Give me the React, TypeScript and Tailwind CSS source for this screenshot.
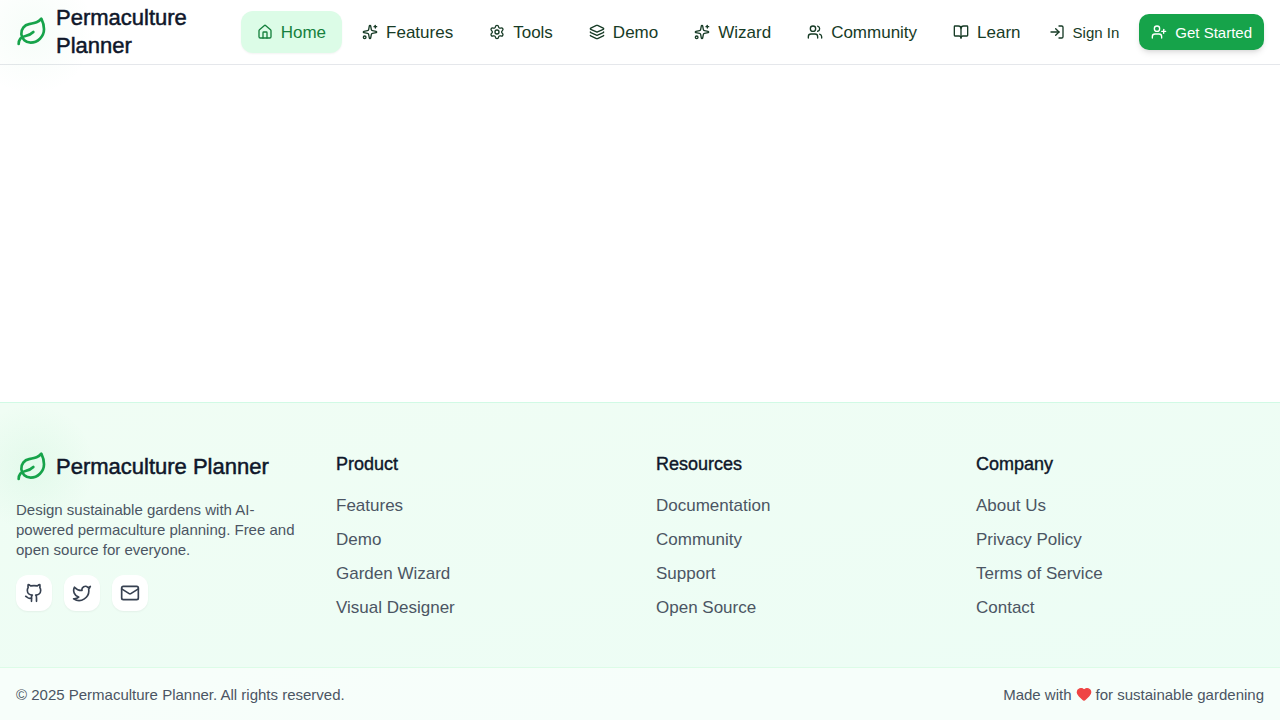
import {
  Leaf, House, Sparkles, Settings, Layers, Users, BookOpen, LogIn, UserPlus, Github, Twitter, Mail, Heart,
} from 'lucide-react';

const navItems = [
  { label: 'Home', icon: House, active: true },
  { label: 'Features', icon: Sparkles },
  { label: 'Tools', icon: Settings },
  { label: 'Demo', icon: Layers },
  { label: 'Wizard', icon: Sparkles },
  { label: 'Community', icon: Users },
  { label: 'Learn', icon: BookOpen },
];

const columns = [
  { title: 'Product', links: ['Features', 'Demo', 'Garden Wizard', 'Visual Designer'] },
  { title: 'Resources', links: ['Documentation', 'Community', 'Support', 'Open Source'] },
  { title: 'Company', links: ['About Us', 'Privacy Policy', 'Terms of Service', 'Contact'] },
];

const socials = [
  { label: 'GitHub', icon: Github },
  { label: 'Twitter', icon: Twitter },
  { label: 'Email', icon: Mail },
];

function Logo({ glow }: { glow: string }) {
  return (
    <a href="#" className="flex min-w-0 items-center gap-2">
      <span className="relative size-8 shrink-0">
        <span className={`pointer-events-none absolute -inset-12 rounded-full ${glow}`} />
        <Leaf className="relative size-8 text-[#16a34a]" />
      </span>
      <span className="relative text-[22px] leading-7 font-medium text-[#0f172a] [-webkit-text-stroke:0.5px]">
        Permaculture Planner
      </span>
    </a>
  );
}

export default function App() {
  return (
    <div className="flex min-h-screen flex-col overflow-x-hidden bg-white font-['Liberation_Sans',Arial,sans-serif] text-[17px] text-[#0f172a]">
      <header className="border-b border-[#e5e7eb]">
        <div className="flex h-16 items-center px-4">
          <div className="min-w-0 flex-1 pr-6">
            <Logo glow="bg-radial from-[#22c55e]/4 to-transparent to-70%" />
          </div>
          <nav className="flex items-center gap-1">
            {navItems.map(({ label, icon: Icon, active }) => (
              <a
                key={label}
                href="#"
                className={`flex items-center gap-2 rounded-xl px-4 py-2 ${
                  active ? 'bg-[#dcfce7] text-[#15803d] shadow-xs' : 'text-[#173b26]'
                }`}
              >
                <Icon className="size-4" />
                <span className="pt-0.5 leading-6">{label}</span>
              </a>
            ))}
          </nav>
          <div className="flex items-center gap-2 text-[15px] leading-5">
            <button type="button" className="flex h-9 items-center gap-2 px-3 text-[#173b26]">
              <LogIn className="size-4" />
              <span className="pt-0.5">Sign In</span>
            </button>
            <button
              type="button"
              className="flex h-9 items-center gap-2 rounded-[10px] bg-[#16a34a] px-3 text-white shadow-md"
            >
              <UserPlus className="size-4" />
              <span className="pt-0.5">Get Started</span>
            </button>
          </div>
        </div>
      </header>

      <main className="flex-1" />

      <footer className="border-t border-[#d1fae5] bg-linear-to-br from-[#f0fdf4] to-[#ecfdf5]">
        <div className="grid grid-cols-4 gap-8 px-4 pt-12 pb-[46px]">
          <div>
            <Logo glow="bg-radial from-[#22c55e]/6 to-transparent to-70%" />
            <p className="mt-[17px] text-[15px] leading-5 text-[#4b5563]">
              Design sustainable gardens with AI-powered permaculture planning. Free and open source for everyone.
            </p>
            <div className="mt-[15px] flex gap-3">
              {socials.map(({ label, icon: Icon }) => (
                <a key={label} href="#" aria-label={label} className="rounded-xl bg-white p-2 text-[#374151] shadow-xs">
                  <Icon className="size-5" />
                </a>
              ))}
            </div>
          </div>
          {columns.map(({ title, links }) => (
            <div key={title}>
              <h3 className="mb-4 text-lg leading-[26px] font-medium [-webkit-text-stroke:0.4px]">{title}</h3>
              <ul className="flex flex-col gap-2 leading-[26px] text-[#4b5563]">
                {links.map((link) => (
                  <li key={link}>
                    <a href="#">{link}</a>
                  </li>
                ))}
              </ul>
            </div>
          ))}
        </div>
        <div className="flex items-center justify-between border-t border-[#dcfce7] bg-white/50 px-4 py-4 text-[15px] leading-[18px] text-[#4b5563]">
          <p className="pt-0.5">© 2025 Permaculture Planner. All rights reserved.</p>
          <p className="flex items-center gap-1">
            <span className="pt-0.5">Made with</span>
            <Heart className="size-4 fill-current text-[#ef4444]" />
            <span className="pt-0.5">for sustainable gardening</span>
          </p>
        </div>
      </footer>
    </div>
  );
}
